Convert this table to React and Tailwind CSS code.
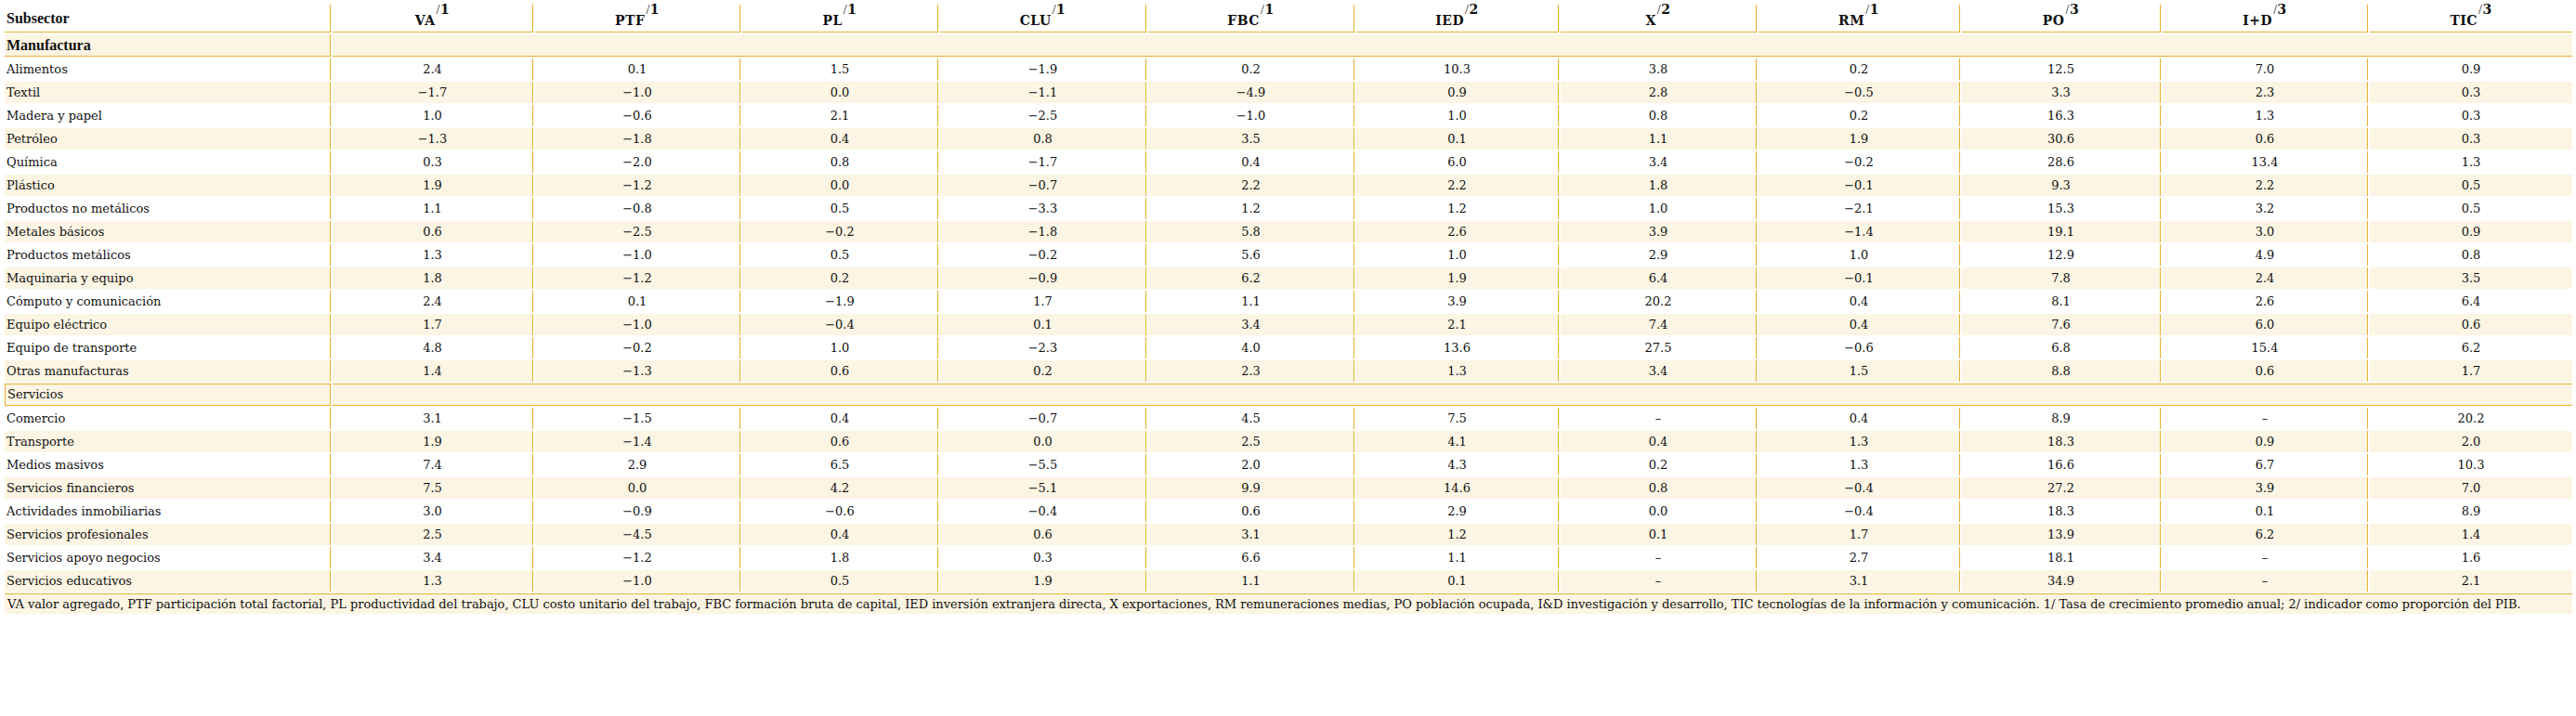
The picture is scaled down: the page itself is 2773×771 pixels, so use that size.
import React from 'react';

const cols = [
  { label: 'VA', n: '1', w: 'w-[216px]' },
  { label: 'PTF', n: '1', w: 'w-[221px]' },
  { label: 'PL', n: '1', w: 'w-[211px]' },
  { label: 'CLU', n: '1', w: 'w-[222px]' },
  { label: 'FBC', n: '1', w: 'w-[222px]' },
  { label: 'IED', n: '2', w: 'w-[218px]' },
  { label: 'X', n: '2', w: 'w-[211px]' },
  { label: 'RM', n: '1', w: 'w-[217px]' },
  { label: 'PO', n: '3', w: 'w-[214px]' },
  { label: 'I+D', n: '3', w: 'w-[221px]' },
  { label: 'TIC', n: '3', w: 'w-[218px]' },
];

const manufactura = [
  ['Alimentos', '2.4', '0.1', '1.5', '−1.9', '0.2', '10.3', '3.8', '0.2', '12.5', '7.0', '0.9'],
  ['Textil', '−1.7', '−1.0', '0.0', '−1.1', '−4.9', '0.9', '2.8', '−0.5', '3.3', '2.3', '0.3'],
  ['Madera y papel', '1.0', '−0.6', '2.1', '−2.5', '−1.0', '1.0', '0.8', '0.2', '16.3', '1.3', '0.3'],
  ['Petróleo', '−1.3', '−1.8', '0.4', '0.8', '3.5', '0.1', '1.1', '1.9', '30.6', '0.6', '0.3'],
  ['Química', '0.3', '−2.0', '0.8', '−1.7', '0.4', '6.0', '3.4', '−0.2', '28.6', '13.4', '1.3'],
  ['Plástico', '1.9', '−1.2', '0.0', '−0.7', '2.2', '2.2', '1.8', '−0.1', '9.3', '2.2', '0.5'],
  ['Productos no metálicos', '1.1', '−0.8', '0.5', '−3.3', '1.2', '1.2', '1.0', '−2.1', '15.3', '3.2', '0.5'],
  ['Metales básicos', '0.6', '−2.5', '−0.2', '−1.8', '5.8', '2.6', '3.9', '−1.4', '19.1', '3.0', '0.9'],
  ['Productos metálicos', '1.3', '−1.0', '0.5', '−0.2', '5.6', '1.0', '2.9', '1.0', '12.9', '4.9', '0.8'],
  ['Maquinaria y equipo', '1.8', '−1.2', '0.2', '−0.9', '6.2', '1.9', '6.4', '−0.1', '7.8', '2.4', '3.5'],
  ['Cómputo y comunicación', '2.4', '0.1', '−1.9', '1.7', '1.1', '3.9', '20.2', '0.4', '8.1', '2.6', '6.4'],
  ['Equipo eléctrico', '1.7', '−1.0', '−0.4', '0.1', '3.4', '2.1', '7.4', '0.4', '7.6', '6.0', '0.6'],
  ['Equipo de transporte', '4.8', '−0.2', '1.0', '−2.3', '4.0', '13.6', '27.5', '−0.6', '6.8', '15.4', '6.2'],
  ['Otras manufacturas', '1.4', '−1.3', '0.6', '0.2', '2.3', '1.3', '3.4', '1.5', '8.8', '0.6', '1.7'],
];

const servicios = [
  ['Comercio', '3.1', '−1.5', '0.4', '−0.7', '4.5', '7.5', '–', '0.4', '8.9', '–', '20.2'],
  ['Transporte', '1.9', '−1.4', '0.6', '0.0', '2.5', '4.1', '0.4', '1.3', '18.3', '0.9', '2.0'],
  ['Medios masivos', '7.4', '2.9', '6.5', '−5.5', '2.0', '4.3', '0.2', '1.3', '16.6', '6.7', '10.3'],
  ['Servicios financieros', '7.5', '0.0', '4.2', '−5.1', '9.9', '14.6', '0.8', '−0.4', '27.2', '3.9', '7.0'],
  ['Actividades inmobiliarias', '3.0', '−0.9', '−0.6', '−0.4', '0.6', '2.9', '0.0', '−0.4', '18.3', '0.1', '8.9'],
  ['Servicios profesionales', '2.5', '−4.5', '0.4', '0.6', '3.1', '1.2', '0.1', '1.7', '13.9', '6.2', '1.4'],
  ['Servicios apoyo negocios', '3.4', '−1.2', '1.8', '0.3', '6.6', '1.1', '–', '2.7', '18.1', '–', '1.6'],
  ['Servicios educativos', '1.3', '−1.0', '0.5', '1.9', '1.1', '0.1', '–', '3.1', '34.9', '–', '2.1'],
];

const nota =
  'VA valor agregado, PTF participación total factorial, PL productividad del trabajo, CLU costo unitario del trabajo, FBC formación bruta de capital, IED inversión extranjera directa, X exportaciones, RM remuneraciones medias, PO población ocupada, I&D investigación y desarrollo, TIC tecnologías de la información y comunicación. 1/ Tasa de crecimiento promedio anual; 2/ indicador como proporción del PIB.';

const DataRow = ({ row, cream }) => (
  <tr className={cream ? 'bg-[#fcf5e3]' : ''}>
    {row.map((v, i) => (
      <td
        key={i}
        className={
          'h-[23px] p-0 leading-[18px] whitespace-nowrap ' +
          (i === 0 ? 'text-left pl-[2px] ' : 'text-center ') +
          (i < row.length - 1 ? 'border-r border-[#e9b12a]' : '')
        }
      >
        {v}
      </td>
    ))}
  </tr>
);

export default function App() {
  return (
    <div className="bg-white w-[2773px] h-[771px] pl-[3px] pt-[3px] text-[#111] font-['DejaVu_Serif',serif] text-[13px]">
      <table className="table-fixed border-separate border-spacing-[2px] w-[2768px]">
        <thead>
          <tr>
            <th className="w-[351px] h-[30px] p-0 pl-[2px] pb-[5px] align-bottom text-left border-b border-r border-[#e9b12a] font-['Liberation_Serif',serif] font-bold text-[16px] leading-[18px]">
              Subsector
            </th>
            {cols.map((c, i) => (
              <th
                key={c.label}
                className={
                  c.w +
                  ' h-[30px] p-0 pb-[3px] align-bottom text-center border-b border-[#e9b12a] font-bold text-[14px] leading-[18px] tracking-[0.5px] ' +
                  (i < cols.length - 1 ? 'border-r' : '')
                }
              >
                {c.label}
                <sup className="text-[14px] align-[5px] ml-[1px]">
                  <span className="font-normal font-['Liberation_Serif',serif]">/</span>
                  <span className="font-bold">{c.n}</span>
                </sup>
              </th>
            ))}
          </tr>
        </thead>
        <tbody>
          <tr className="bg-[#fcf5e3]">
            <td className="h-[24px] p-0 pl-[2px] border-b border-r border-[#e9b12a] font-['Liberation_Serif',serif] font-bold text-[16px] leading-[18px]">
              Manufactura
            </td>
            <td colSpan={11} className="p-0 border-b border-[#e9b12a]"></td>
          </tr>
          {manufactura.map((r, i) => (
            <DataRow key={r[0]} row={r} cream={i % 2 === 1} />
          ))}
          <tr className="bg-[#fcf5e3]">
            <td className="h-[24px] p-0 pl-[2px] border border-[#e9b12a] leading-[18px]">Servicios</td>
            <td colSpan={11} className="p-0 border-y border-[#e9b12a]"></td>
          </tr>
          {servicios.map((r, i) => (
            <DataRow key={r[0]} row={r} cream={i % 2 === 1} />
          ))}
        </tbody>
        <tfoot>
          <tr className="bg-[#fcf5e3]">
            <td colSpan={12} className="h-[22px] p-0 pl-[3px] border-t border-[#e9b12a] whitespace-nowrap leading-[18px] tracking-[-0.03px]">
              {nota}
            </td>
          </tr>
        </tfoot>
      </table>
    </div>
  );
}
